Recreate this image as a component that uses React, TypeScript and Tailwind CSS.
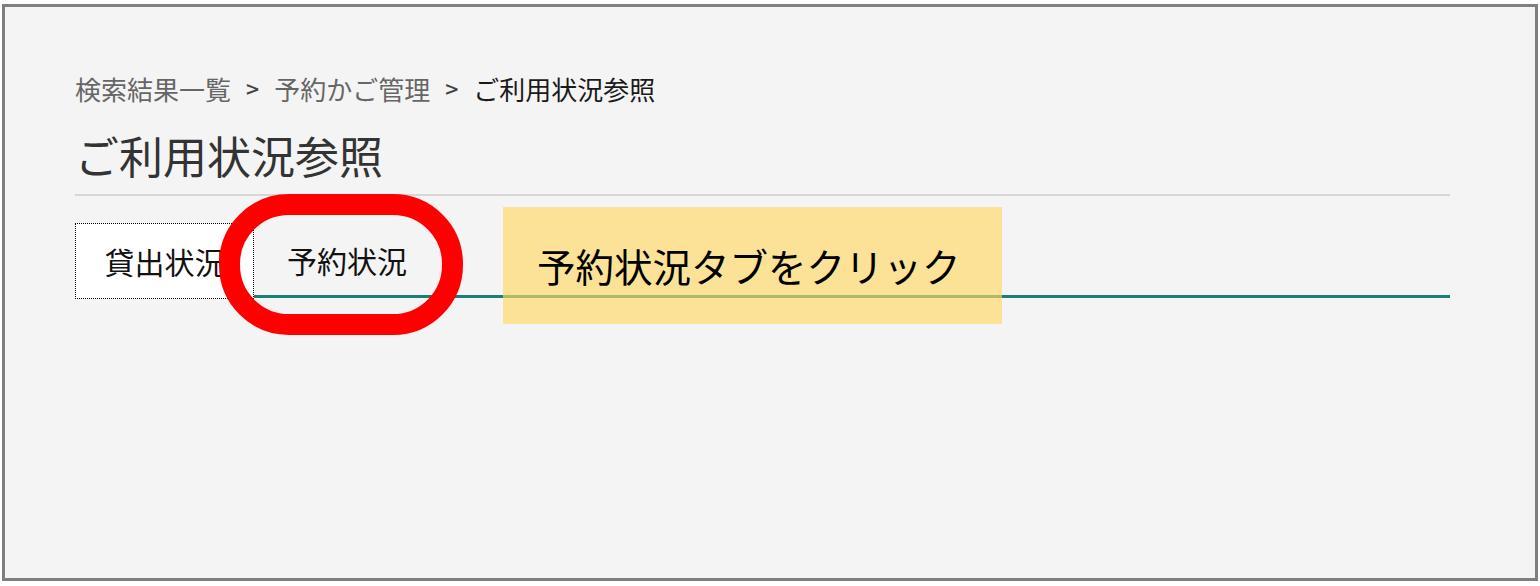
import React from 'react';

const crumbs = ['検索結果一覧', '予約かご管理'];

export default function App() {
    return (
        <div
            className="relative w-[1540px] h-[586px] bg-white overflow-hidden"
            style={{ fontFamily: '"Noto Sans CJK JP", "Noto Sans", sans-serif' }}
        >
            {/* Page frame */}
            <div className="ml-[2px] mt-[4px] w-[1536px] h-[577px] border-[3px] border-[#7f7f7f] bg-[#f4f4f4] pl-[70px] pr-[85px] pt-[62px]">
                {/* Breadcrumb */}
                <nav className="flex items-center text-[26px] leading-[39px] text-[#666]">
                    {crumbs.map((c) => (
                        <React.Fragment key={c}>
                            <span>{c}</span>
                            <span className="mx-[15px] text-[23px] font-medium text-[#444]">&gt;</span>
                        </React.Fragment>
                    ))}
                    <span className="text-[#1a1a1a]">ご利用状況参照</span>
                </nav>

                {/* Title */}
                <h1 className="mt-[21px] pb-[12px] border-b-2 border-[#d6d6d6] text-[44px] leading-[53px] text-[#333] font-normal">
                    ご利用状況参照
                </h1>

                {/* Tabs */}
                <div className="mt-[27px] flex items-end h-[76px]">
                    <button className="h-[76px] w-[179px] bg-white border border-dotted border-black text-[30px] text-[#111] flex items-center justify-center">
                        貸出状況
                    </button>
                    <div className="flex-1 mb-[1px] border-b-[3px] border-[#1a7f74] h-[72px] flex items-center">
                        <button className="px-[33px] text-[30px] text-[#111]">予約状況</button>
                    </div>
                </div>
            </div>

            {/* Callout */}
            <div className="absolute left-[503px] top-[207px] w-[499px] h-[117px] bg-[#ffd966]/65 flex items-center pl-[34px]">
                <span className="text-[38.5px] text-black leading-none">予約状況タブをクリック</span>
            </div>

            {/* Highlight ring */}
            <div className="absolute left-[219px] top-[194px] w-[244px] h-[141px] rounded-[70px] border-[21px] border-[#ff0000]" />
        </div>
    );
}
